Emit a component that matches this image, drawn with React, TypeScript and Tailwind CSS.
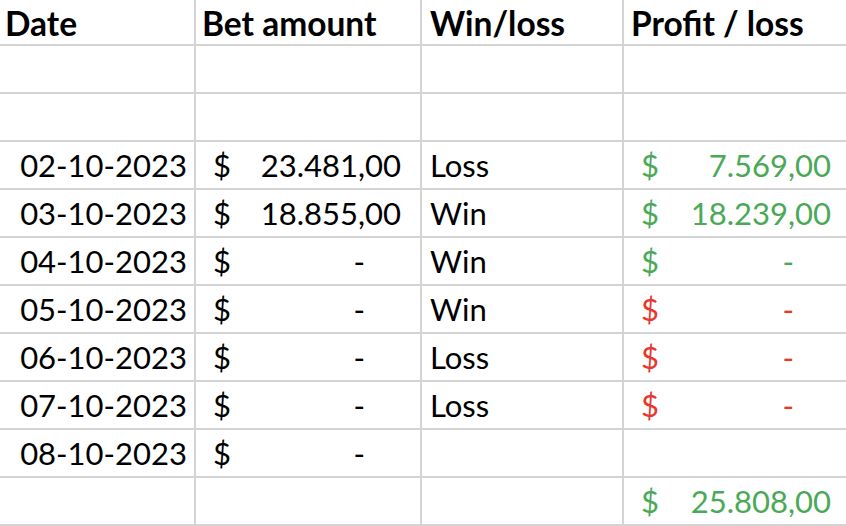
import React from "react";

type Row = {
  date?: string;
  bet?: string | null; // null = dash, undefined = empty
  wl?: string;
  profit?: string | null;
  color?: "green" | "red";
};

const rows: Row[] = [
  {},
  {},
  { date: "02-10-2023", bet: "23.481,00", wl: "Loss", profit: "7.569,00", color: "green" },
  { date: "03-10-2023", bet: "18.855,00", wl: "Win", profit: "18.239,00", color: "green" },
  { date: "04-10-2023", bet: null, wl: "Win", profit: null, color: "green" },
  { date: "05-10-2023", bet: null, wl: "Win", profit: null, color: "red" },
  { date: "06-10-2023", bet: null, wl: "Loss", profit: null, color: "red" },
  { date: "07-10-2023", bet: null, wl: "Loss", profit: null, color: "red" },
  { date: "08-10-2023", bet: null },
  { profit: "25.808,00", color: "green" },
];

function Money({
  value,
  present,
  color,
  amountPad,
  dashPad,
}: {
  value: string | null | undefined;
  present: boolean;
  color?: "green" | "red";
  amountPad: string;
  dashPad: string;
}) {
  const colorCls =
    color === "green" ? "text-[#4aa957]" : color === "red" ? "text-[#e8372c]" : "text-black";
  if (!present) return <div className="bg-white" />;
  return (
    <div className={`bg-white flex items-center justify-between pl-[17px] ${colorCls}`}>
      <span>$</span>
      {value === null ? (
        <span className={dashPad}>-</span>
      ) : (
        <span className={amountPad}>{value}</span>
      )}
    </div>
  );
}

export default function App() {
  return (
    <div
      className="w-[846px] h-[526px] bg-white overflow-hidden text-black"
      style={{ fontFamily: "Lato, 'Open Sans', sans-serif" }}
    >
      <div className="grid grid-cols-[194px_224px_200px_222px] grid-rows-[44px_repeat(10,46px)] gap-[2px] pb-[2px] bg-[#d4d4d4] text-[31px] leading-none">
        <div className="bg-white flex items-center pl-[5px] pt-[3px] font-bold text-[33.5px]">Date</div>
        <div className="bg-white flex items-center pl-[6px] pt-[3px] font-bold text-[33.5px]">Bet amount</div>
        <div className="bg-white flex items-center pl-[8px] pt-[3px] font-bold text-[33.5px]">Win/loss</div>
        <div className="bg-white flex items-center pl-[7px] pt-[3px] font-bold text-[33.5px]">Profit / loss</div>
        {rows.map((r, i) => (
          <React.Fragment key={i}>
            <div className="bg-white flex items-center justify-end pr-[7px]">{r.date ?? ""}</div>
            <Money
              value={r.bet}
              present={r.bet !== undefined}
              amountPad="pr-[19px]"
              dashPad="pr-[55px]"
            />
            <div className="bg-white flex items-center pl-[8px]">{r.wl ?? ""}</div>
            <Money
              value={r.profit}
              present={r.profit !== undefined}
              color={r.color}
              amountPad="pr-[15px]"
              dashPad="pr-[52px]"
            />
          </React.Fragment>
        ))}
      </div>
    </div>
  );
}
